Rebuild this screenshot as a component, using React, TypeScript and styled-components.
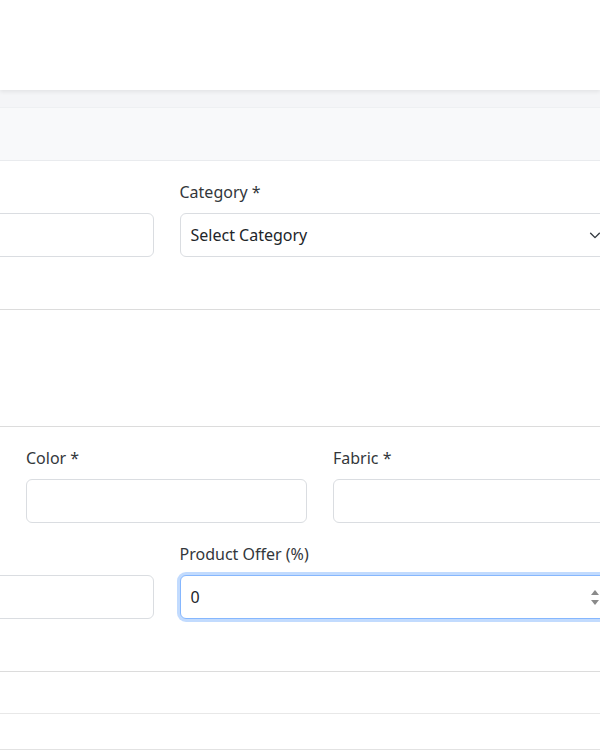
import React from "react";
import styled, { createGlobalStyle } from "styled-components";

const GlobalStyle = createGlobalStyle`
  html, body { margin: 0; padding: 0; background: #ffffff; overflow: hidden; }
  body { font-family: "Noto Sans", "Open Sans", sans-serif; color: #212529; font-size: 16px; }
  * { box-sizing: border-box; }
`;

const Navbar = styled.header`
  height: 90px;
  background: #ffffff;
  box-shadow: 0 2px 4px rgba(0, 0, 0, 0.07);
  position: relative;
  z-index: 1;
`;

const PageBand = styled.div`
  background: #f4f5f7;
  padding-top: 17px;
`;

const CardHeader = styled.div`
  height: 54px;
  background: #f8f9fa;
  border-top: 1px solid #eef0f2;
  border-bottom: 1px solid #e9ebee;
`;

const Section = styled.section<{ $h: number; $line?: string }>`
  height: ${(p) => p.$h}px;
  border-bottom: 1px solid ${(p) => p.$line || "#dcdcdc"};
  background: #ffffff;
`;

const Padded = styled.div<{ $top: number }>`
  padding-top: ${(p) => p.$top}px;
`;

const Grid = styled.div<{ $cols: number }>`
  display: grid;
  grid-template-columns: repeat(${(p) => p.$cols}, 1fr);
  column-gap: 26px;
  margin-left: -281px;
  width: 895px;
  margin-bottom: 19px;
`;

const Field = styled.div`
  display: flex;
  flex-direction: column;
`;

const Label = styled.label`
  font-size: 16px;
  line-height: 24px;
  height: 24px;
  color: #33373b;
  margin-bottom: 9px;
  white-space: nowrap;
`;

const Control = styled.div<{ $focus?: boolean }>`
  height: 44px;
  border: 1px solid ${(p) => (p.$focus ? "#86b7fe" : "#dadde1")};
  border-radius: 6px;
  background: #ffffff;
  display: flex;
  align-items: center;
  padding: 0 10px;
  font-size: 16px;
  color: #212529;
  box-shadow: ${(p) => (p.$focus ? "0 0 0 3px rgba(13, 110, 253, 0.25)" : "none")};
`;

const ControlText = styled.span`
  flex: 1;
  white-space: nowrap;
`;

const Chevron = styled.svg`
  width: 14px;
  height: 14px;
  margin-right: 1px;
  flex: none;
`;

const Spinner = styled.div`
  display: flex;
  flex-direction: column;
  gap: 5px;
  margin-right: 4px;
`;

const Tri = styled.span<{ $up?: boolean }>`
  width: 0;
  height: 0;
  border-left: 4px solid transparent;
  border-right: 4px solid transparent;
  ${(p) => (p.$up ? "border-bottom: 5px solid #8a8a8a;" : "border-top: 5px solid #8a8a8a;")}
`;

export default function App() {
  return (
    <>
      <GlobalStyle />
      <Navbar />
      <PageBand>
        <CardHeader />
      </PageBand>
      <Section $h={149}>
        <Padded $top={19}>
          <Grid $cols={2}>
            <Field>
              <Label />
              <Control />
            </Field>
            <Field>
              <Label>Category *</Label>
              <Control>
                <ControlText>Select Category</ControlText>
                <Chevron viewBox="0 0 16 16">
                  <path d="M3 6l5 5 5-5" fill="none" stroke="#343a40" strokeWidth="1.6" strokeLinecap="round" strokeLinejoin="round" />
                </Chevron>
              </Control>
            </Field>
          </Grid>
        </Padded>
      </Section>
      <Section $h={117} />
      <Section $h={245}>
        <Padded $top={19}>
          <Grid $cols={3}>
            <Field>
              <Label />
              <Control />
            </Field>
            <Field>
              <Label>Color *</Label>
              <Control />
            </Field>
            <Field>
              <Label>Fabric *</Label>
              <Control />
            </Field>
          </Grid>
          <Grid $cols={2}>
            <Field>
              <Label />
              <Control />
            </Field>
            <Field>
              <Label>Product Offer (%)</Label>
              <Control $focus>
                <ControlText>0</ControlText>
                <Spinner>
                  <Tri $up />
                  <Tri />
                </Spinner>
              </Control>
            </Field>
          </Grid>
        </Padded>
      </Section>
      <Section $h={42} $line="#e8e8e8" />
      <Section $h={36} $line="#e2e2e2" />
    </>
  );
}
